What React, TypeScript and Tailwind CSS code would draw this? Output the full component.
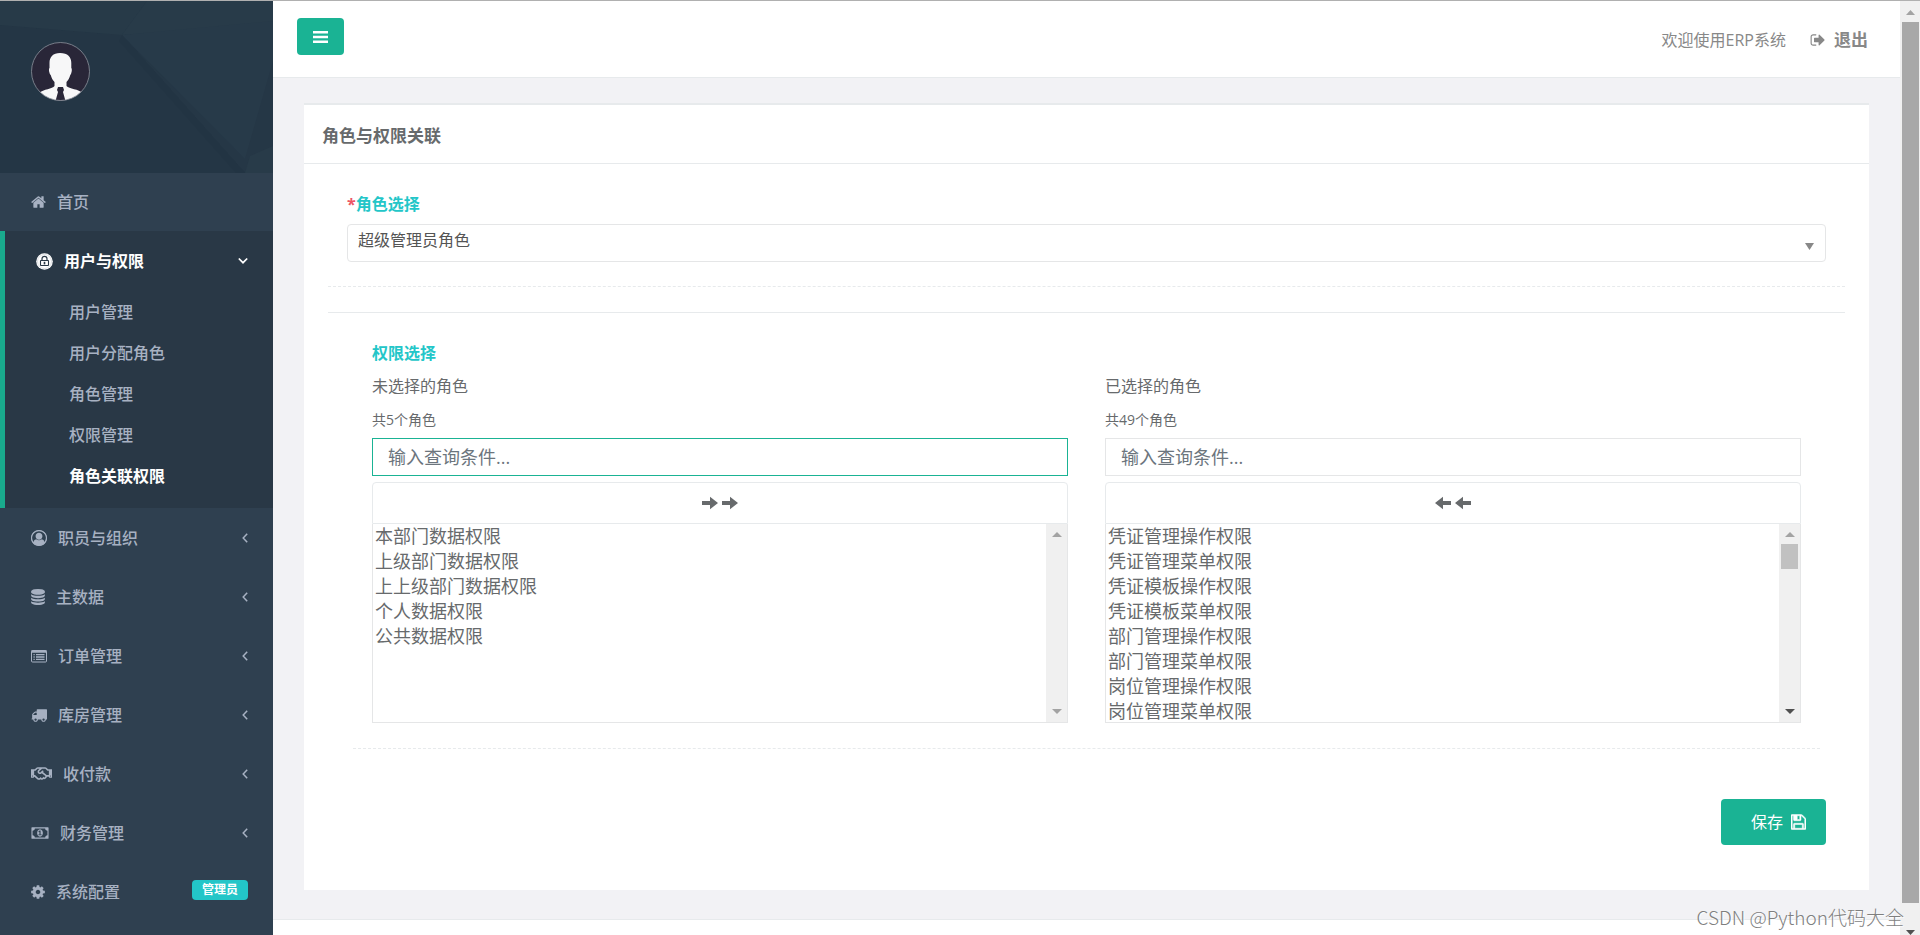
import type { ReactNode } from "react";
import { FaRegHandshake } from "react-icons/fa";

const HomeIcon = () => (
  <svg className="h-4 w-[15px] fill-current" viewBox="64 0 1664 1792">
    <path d="M1472 992v480q0 26-19 45t-45 19h-384v-384h-256v384h-384q-26 0-45-19t-19-45v-480q0-1 .5-3t.5-3l575-474 575 474q1 2 1 6zm223-69l-62 74q-8 9-21 11h-3q-13 0-21-7l-692-577-692 577q-12 8-24 7-13-2-21-11l-62-74q-8-10-7-23.5t11-21.5l719-599q32-26 76-26t76 26l244 204v-195q0-14 9-23t23-9h192q14 0 23 9t9 23v408l219 182q10 8 11 21.5t-7 23.5z" />
  </svg>
);

const LockIcon = () => (
  <svg className="size-[17px]" viewBox="0 0 17 17" fill="none" stroke="#293846">
    <circle cx="8.500" cy="8.500" r="8.300" fill="#ffffff" stroke="none" />
    <circle cx="8.500" cy="8.500" r="7" stroke="#b9c0c8" strokeWidth="0.500" />
    <path d="M6 7.500V5.800a2.500 2.500 0 0 1 5 0V7.500" strokeWidth="1.200" />
    <rect x="4.500" y="7.500" width="8" height="5" rx="0.500" strokeWidth="1.100" />
    <path d="M8.500 8.800v2.600" strokeWidth="1.600" />
  </svg>
);

const UserIcon = () => (
  <svg className="size-4 fill-current" viewBox="0 0 1792 1792">
    <path d="M896 0q182 0 348 71t286 191 191 286 71 348q0 181-70.500 347t-190.500 286-286 191.500-349 71.500-349-71-285.500-191.500-190.500-286-71-347.500 71-348 191-286 286-191 348-71zm619 1351q149-205 149-455 0-156-61-298t-164-245-245-164-298-61-298 61-245 164-164 245-61 298q0 250 149 455 66-327 306-327 131 128 313 128t313-128q240 0 306 327zm-235-647q0-159-112.500-271.500t-271.500-112.500-271.500 112.500-112.500 271.500 112.500 271.500 271.500 112.500 271.500-112.500 112.500-271.500z" fillRule="evenodd" />
    <path d="M896 40a856 856 0 1 0 0 1712a856 856 0 1 0 0-1712z" fill="none" stroke="currentColor" strokeWidth="80" />
  </svg>
);

const DatabaseIcon = () => (
  <svg className="h-4 w-[14px] fill-current" viewBox="128 0 1536 1792">
    <path d="M896 768q237 0 443-43t325-127v170q0 69-103 128t-280 93.500-385 34.500-385-34.500-280-93.500-103-128v-170q119 84 325 127t443 43zm0 768q237 0 443-43t325-127v170q0 69-103 128t-280 93.500-385 34.500-385-34.500-280-93.500-103-128v-170q119 84 325 127t443 43zm0-384q237 0 443-43t325-127v170q0 69-103 128t-280 93.500-385 34.500-385-34.500-280-93.500-103-128v-170q119 84 325 127t443 43zm0-1152q208 0 385 34.500t280 93.500 103 128v128q0 69-103 128t-280 93.500-385 34.500-385-34.500-280-93.500-103-128v-128q0-69 103-128t280-93.500 385-34.500z" />
  </svg>
);

const ListIcon = () => (
  <svg className="h-4 w-4" viewBox="0 0 16 16" fill="none" stroke="currentColor">
    <rect x="0.500" y="2.500" width="15" height="11.500" rx="1" />
    <path d="M0.500 3.500h15" strokeWidth="2.500" />
    <path d="M2.500 6.700h1.200M5 6.700h8.500M2.500 9h1.200M5 9h8.500M2.500 11.300h1.200M5 11.300h8.500" strokeWidth="1.300" />
  </svg>
);

const TruckIcon = () => (
  <svg className="h-4 w-4 fill-current" viewBox="0 0 1792 1792">
    <path d="M640 1408q0-52-38-90t-90-38-90 38-38 90 38 90 90 38 90-38 38-90zm-384-512h384v-256h-158q-13 0-22 9l-195 195q-9 9-9 22v30zm1280 512q0-52-38-90t-90-38-90 38-38 90 38 90 90 38 90-38 38-90zm256-1088v1024q0 15-4 26.500t-13.500 18.500-16.500 11.500-23.500 6-22.500 2-25.500 0-22.500-.5q0 106-75 181t-181 75-181-75-75-181h-384q0 106-75 181t-181 75-181-75-75-181h-64q-3 0-22.500.5t-25.500 0-22.500-2-23.500-6-16.500-11.500-13.500-18.500-4-26.500q0-26 19-45t45-19v-320q0-8-.5-35t0-38 2.500-34.500 6.500-37 14-30.500 22.500-30l198-198q19-19 50.500-32t58.500-13h160v-192q0-26 19-45t45-19h1024q26 0 45 19t19 45z" />
  </svg>
);

const MoneyIcon = () => (
  <svg className="h-4 w-[18px] fill-current" viewBox="0 0 1920 1792">
    <path d="M768 1152h384v-96h-128v-448h-114l-148 137 77 80q42-37 55-57h2v288h-128v96zm512-256q0 70-21 142t-59.500 134-101.500 101-138 39-138-39-101.500-101-59.500-134-21-142 21-142 59.500-134 101.500-101 138-39 138 39 101.500 101 59.500 134 21 142zm512 256v-512q-106 0-181-75t-75-181h-1152q0 106-75 181t-181 75v512q106 0 181 75t75 181h1152q0-106 75-181t181-75zm128-832v1152q0 26-19 45t-45 19h-1792q-26 0-45-19t-19-45v-1152q0-26 19-45t45-19h1792q26 0 45 19t19 45z" />
  </svg>
);

const CogIcon = () => (
  <svg className="h-4 w-[14px] fill-current" viewBox="128 0 1536 1792">
    <path d="M1152 896q0-106-75-181t-181-75-181 75-75 181 75 181 181 75 181-75 75-181zm512-109v222q0 12-8 23t-20 13l-185 28q-19 54-39 91 35 50 107 138 10 12 10 25t-9 23q-27 37-99 108t-94 71q-12 0-26-9l-138-108q-44 23-91 38-16 136-29 186-7 28-36 28h-222q-14 0-24.500-8.500t-11.500-21.500l-28-184q-49-16-90-37l-141 107q-10 9-25 9-14 0-25-11-126-114-165-168-7-10-7-23 0-12 8-23 15-21 51-66.500t54-70.500q-27-50-41-99l-183-27q-13-2-21-12.500t-8-23.500v-222q0-12 8-23t19-13l186-28q14-46 39-92-40-57-107-138-10-12-10-24 0-10 9-23 26-36 98.500-107.500t94.500-71.500q13 0 26 10l138 107q44-23 91-38 16-136 29-186 7-28 36-28h222q14 0 24.500 8.500t11.500 21.500l28 184q49 16 90 37l142-107q9-9 24-9 13 0 25 10 129 119 165 170 7 8 7 22 0 12-8 23-15 21-51 66.500t-54 70.500q26 50 41 98l183 28q13 2 21 12.500t8 23.500z" />
  </svg>
);

const SignOutIcon = () => (
  <svg className="h-4 w-4 fill-current" viewBox="64 0 1664 1792">
    <path d="M704 1440q0 4 1 20t.5 26.500-3 23.500-10 19.500-20.500 6.500h-320q-119 0-203.500-84.500t-84.500-203.500v-704q0-119 84.500-203.500t203.500-84.500h320q13 0 22.500 9.500t9.500 22.500q0 4 1 20t.5 26.500-3 23.500-10 19.500-20.500 6.500h-320q-66 0-113 47t-47 113v704q0 66 47 113t113 47h312l11.500 1 11.500 3 8 5.500 7 9 2 13.500zm928-544q0 26-19 45l-544 544q-19 19-45 19t-45-19-19-45v-288h-448q-26 0-45-19t-19-45v-384q0-26 19-45t45-19h448v-288q0-26 19-45t45-19 45 19l544 544q19 19 19 45z" />
  </svg>
);

const SaveIcon = () => (
  <svg className="h-[18px] w-[15px] fill-current" viewBox="128 0 1536 1792">
    <path
      d="M512 1536h768v-384h-768v384zm896 0h128v-896q0-14-10-38.500t-20-34.500l-281-281q-10-10-34-20t-39-10v416q0 40-28 68t-68 28h-576q-40 0-68-28t-28-68v-416h-128v1280h128v-416q0-40 28-68t68-28h832q40 0 68 28t28 68v416zm-384-928v-320q0-13-9.500-22.500t-22.500-9.500h-192q-13 0-22.500 9.500t-9.500 22.500v320q0 13 9.500 22.500t22.500 9.500h192q13 0 22.500-9.500t9.500-22.500zm640 32v928q0 40-28 68t-68 28h-1344q-40 0-68-28t-28-68v-1344q0-40 28-68t68-28h928q40 0 88 20t76 48l280 280q28 28 48 76t20 88z"
      stroke="currentColor"
      strokeWidth="50"
    />
  </svg>
);

const ArrowIcon = ({ left }: { left?: boolean }) => (
  <svg className="h-4 w-4 fill-current" viewBox="0 0 16 16">
    <path d={left ? "M0 8l8-6.300v4.300h8v4H8v4.300z" : "M16 8L8 1.700V6H0v4h8v4.300z"} />
  </svg>
);

const Triangle = ({ down, className }: { down?: boolean; className: string }) => (
  <svg className={className} viewBox="0 0 10 5" preserveAspectRatio="none" fill="currentColor">
    <path d={down ? "M0 0h10L5 5z" : "M0 5h10L5 0z"} />
  </svg>
);

const subItems = ["用户管理", "用户分配角色", "角色管理", "权限管理", "角色关联权限"];

const navItems: { name: string; icon: ReactNode; badge?: string }[] = [
  { name: "职员与组织", icon: <UserIcon /> },
  { name: "主数据", icon: <DatabaseIcon /> },
  { name: "订单管理", icon: <ListIcon /> },
  { name: "库房管理", icon: <TruckIcon /> },
  { name: "收付款", icon: <FaRegHandshake className="h-[17px] w-[21px]" /> },
  { name: "财务管理", icon: <MoneyIcon /> },
  { name: "系统配置", icon: <CogIcon />, badge: "管理员" },
];

const unselected = [
  "本部门数据权限",
  "上级部门数据权限",
  "上上级部门数据权限",
  "个人数据权限",
  "公共数据权限",
];

const selected = [
  "凭证管理操作权限",
  "凭证管理菜单权限",
  "凭证模板操作权限",
  "凭证模板菜单权限",
  "部门管理操作权限",
  "部门管理菜单权限",
  "岗位管理操作权限",
  "岗位管理菜单权限",
];

function Sidebar() {
  return (
    <aside className="w-[273px] shrink-0 bg-[#2f4050] font-medium text-[#a7b1c2]">
      <div className="relative h-[172px] overflow-hidden bg-[#253746]">
        <svg className="absolute inset-0 h-full w-full" viewBox="0 0 273 172" preserveAspectRatio="none">
          <path d="M0 24L122 34L245 172H0z" fill="#243645" />
          <path d="M0 0H147L122 34L0 24z" fill="#273a48" />
          <path d="M147 0H273V24L122 34z" fill="#283b49" />
          <path d="M122 34L273 20V60L245 158z" fill="#273a49" />
          <path d="M122 34L245 172H236L119 40z" fill="#223443" />
          <path d="M245 172L250 155L273 145V172z" fill="#283b49" />
        </svg>
        <svg className="relative mt-[41px] ml-[31px] size-[59px]" viewBox="0 0 59 59">
          <defs>
            <clipPath id="avatar">
              <circle cx="29.500" cy="29.500" r="29" />
            </clipPath>
          </defs>
          <g clipPath="url(#avatar)">
            <rect width="59" height="59" fill="#292638" />
            <path
              d="M29 11c-7 0-10.500 4-10.500 10v5c-1.300 1 0 6 1.200 7 .8 3 2 5 3.800 7v4c-2 3-11 3-15.500 7L6 59h47l-1.500-8C48 47 38 47 35.500 44v-4c1.800-2 3-4 3.800-7 1.200-1 2.200-6 1-7v-5c0-6-3.500-10-11.300-10z"
              fill="#f7f7f8"
            />
            <path d="M27 45h5l1 3-1 2 2.500 9h-10l2.500-9-1-2z" fill="#292638" />
          </g>
          <circle cx="29.500" cy="29.500" r="29" fill="none" stroke="#8d929c" strokeWidth="0.800" />
        </svg>
      </div>
      <nav>
        <a href="#" className="flex h-[58px] items-center gap-[11px] pl-[31px]">
          <HomeIcon />
          首页
        </a>
        <div className="border-l-[5px] border-[#19aa8d] bg-[#293846] pb-3">
          <a href="#" className="flex h-[60px] items-center gap-[11px] pr-[25px] pl-[31px] font-bold text-white">
            <LockIcon />
            <span className="flex-1">用户与权限</span>
            <svg className="h-2 w-[10px]" viewBox="0 0 10 8" fill="none" stroke="currentColor" strokeWidth="1.700">
              <path d="M0.800 1.500L5 5.700L9.200 1.500" />
            </svg>
          </a>
          {subItems.map((name, i) => (
            <a
              key={name}
              href="#"
              className={
                i === subItems.length - 1
                  ? "flex h-[41px] items-center pl-16 font-bold text-white"
                  : "flex h-[41px] items-center pl-16"
              }
            >
              {name}
            </a>
          ))}
        </div>
        {navItems.map(({ name, icon, badge }) => (
          <a key={name} href="#" className="flex h-[59px] items-center gap-[11px] pr-[25px] pl-[31px]">
            {icon}
            <span className="flex-1">{name}</span>
            {badge ? (
              <span className="mb-1 flex h-5 items-center rounded bg-[#23c6c8] px-[10px] text-xs font-bold text-white">
                {badge}
              </span>
            ) : (
              <svg className="h-[10px] w-[6px]" viewBox="0 0 6 10" fill="none" stroke="currentColor" strokeWidth="1.500">
                <path d="M5.200 0.800L1.200 5L5.200 9.200" />
              </svg>
            )}
          </a>
        ))}
      </nav>
    </aside>
  );
}

type PickerProps = {
  id: string;
  title: string;
  count: number;
  options: string[];
  active?: boolean;
};

function Picker({ id, title, count, options, active }: PickerProps) {
  return (
    <div>
      <label htmlFor={id} className="block h-8 leading-8">
        {title}
      </label>
      <p className="flex h-9 items-center text-sm">共{count}个角色</p>
      <input
        type="text"
        aria-label={title}
        placeholder="输入查询条件..."
        className={
          active
            ? "block h-[38px] w-full border border-[#1ab394] px-[15px] text-lg placeholder:text-[#6c757d]"
            : "block h-[38px] w-full border border-[#e5e6e7] px-[15px] text-lg placeholder:text-[#6c757d]"
        }
      />
      <button
        type="button"
        aria-label={active ? "全部添加" : "全部移除"}
        className="mt-[6px] flex h-[42px] w-full items-center justify-center gap-1 rounded-t border border-[#e7eaec]"
      >
        <ArrowIcon left={!active} />
        <ArrowIcon left={!active} />
      </button>
      <div className="flex h-[199px] border border-t-0 border-[#e5e6e7]">
        <select
          id={id}
          multiple
          className="-mt-0.5 flex-1 overflow-hidden bg-transparent text-lg outline-none [scrollbar-width:none]"
        >
          {options.map((name) => (
            <option key={name} className="h-[25px] min-h-0 px-[2px] py-0">
              {name}
            </option>
          ))}
        </select>
        <div className="flex w-[21px] flex-col items-center bg-[#f0f0f0] py-2 text-[#a3a3a3]">
          <Triangle className="h-[5px] w-[10px]" />
          {!active && <div className="mt-[7px] h-[25px] w-[17px] bg-[#c1c1c1]" />}
          <Triangle
            down
            className={active ? "mt-auto h-[5px] w-[10px]" : "mt-auto h-[5px] w-[10px] text-[#505050]"}
          />
        </div>
      </div>
    </div>
  );
}

export default function App() {
  return (
    <div className="relative flex h-screen overflow-hidden border-t border-[#b0b0b0] bg-[#f2f2f5] font-['Open_Sans','Noto_Sans_CJK_SC',sans-serif] text-base text-[#676a6c]">
      <Sidebar />
      <div className="flex min-w-0 flex-1 flex-col">
        <header className="flex h-[77px] shrink-0 items-start justify-between border-b border-[#e7eaec] bg-white pr-8 pl-6">
          <button
            type="button"
            aria-label="菜单"
            className="mt-[17px] flex h-[37px] w-[47px] items-center justify-center rounded bg-[#1ab394] text-white"
          >
            <svg className="h-3 w-[15px] fill-current" viewBox="0 0 15 12">
              <path d="M0 0h15v2.500H0zM0 4.700h15v2.500H0zM0 9.500h15V12H0z" />
            </svg>
          </button>
          <div className="flex h-[77px] items-center gap-6 text-[#888888]">
            <span>欢迎使用ERP系统</span>
            <a href="#" className="flex items-center gap-2 text-[17px] font-bold">
              <SignOutIcon />
              退出
            </a>
          </div>
        </header>

        <main className="flex-1 px-[31px] pt-[25px]">
          <section className="border-t-2 border-[#e7eaec] bg-white pb-[45px]">
            <h5 className="flex h-[59px] items-center border-b border-[#e7eaec] px-[18px] pt-1 text-[17px] font-bold">
              角色与权限关联
            </h5>
            <form className="px-6 pt-6">
              <div className="px-[19px]">
                <label htmlFor="role" className="block h-9 leading-8 font-bold text-[#23c6c8]">
                  <span className="text-[#ed5565]">*</span>角色选择
                </label>
                <div className="relative">
                  <select
                    id="role"
                    className="block h-[38px] w-full appearance-none rounded border border-[#e5e6e7] bg-white px-[10px] pb-[6px] text-[#555555]"
                  >
                    <option>超级管理员角色</option>
                  </select>
                  <Triangle down className="pointer-events-none absolute top-[19px] right-3 h-[7px] w-[9px] text-[#888888]" />
                </div>
              </div>
              <hr className="mt-6 border-dashed border-[#e7eaec]" />
              <hr className="mt-[25px] border-[#e7eaec]" />

              <div className="px-[25px] pt-6">
                <div className="px-[19px]">
                  <h6 className="h-[33px] leading-8 font-bold text-[#23c6c8]">权限选择</h6>
                  <div className="grid grid-cols-2 gap-[37px]">
                    <Picker id="unselected" title="未选择的角色" count={5} options={unselected} active />
                    <Picker id="selected" title="已选择的角色" count={49} options={selected} />
                  </div>
                </div>
                <hr className="mt-[25px] border-dashed border-[#e7eaec]" />
              </div>

              <div className="mt-[50px] flex justify-end px-[19px]">
                <button
                  type="submit"
                  className="flex h-[46px] w-[105px] items-center justify-end gap-2 rounded bg-[#1ab394] pr-5 text-white"
                >
                  保存
                  <SaveIcon />
                </button>
              </div>
            </form>
          </section>
        </main>

        <footer className="h-4 shrink-0 border-t border-[#e7eaec] bg-white" />
      </div>

      <div className="flex w-5 shrink-0 flex-col items-center bg-[#f0f0f0] pt-[9px] text-[#a3a3a3]">
        <Triangle className="h-[5px] w-[9px] shrink-0" />
        <div className="mt-[7px] mb-[27px] w-[17px] flex-1 bg-[#a8a8a8]" />
        <Triangle down className="h-[5px] w-[9px] shrink-0 text-[#505050]" />
      </div>

      <span className="absolute right-4 bottom-0 font-['Noto_Sans_CJK_SC',sans-serif] text-[19px] leading-9 font-light text-[#7f7f7f] [text-shadow:1px_1px_1px_#ffffff]">
        CSDN @Python代码大全
      </span>
    </div>
  );
}
